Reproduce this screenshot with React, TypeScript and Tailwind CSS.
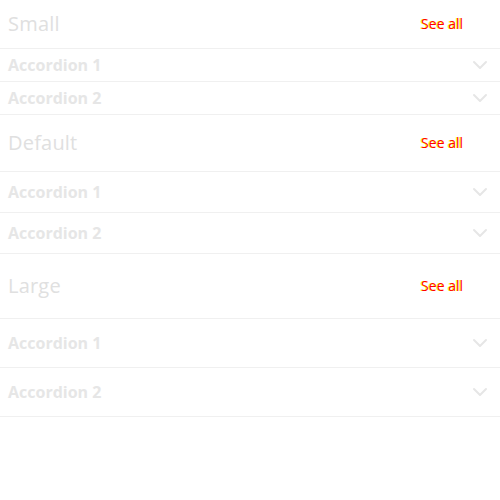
import { ChevronDown } from "lucide-react";

type Size = "small" | "default" | "large";

const SECTIONS: { size: Size; title: string }[] = [
  { size: "small", title: "Small" },
  { size: "default", title: "Default" },
  { size: "large", title: "Large" },
];

// heights include the 1px bottom border
const headerH: Record<Size, string> = {
  small: "h-[49px]",
  default: "h-[57px]",
  large: "h-[65px]",
};

const rowH: Record<Size, string> = {
  small: "h-[33px]",
  default: "h-[41px]",
  large: "h-[49px]",
};

function Section({ size, title }: { size: Size; title: string }) {
  return (
    <section>
      <div className={`flex items-center justify-between border-b border-[#f0f0f0] pl-2 pr-[37px] ${headerH[size]}`}>
        <h2 className="text-[20px] tracking-[0.2px] text-[#e0e0e0]">{title}</h2>
        <a className="mb-[2px] text-[14px] font-medium text-[#ff0000] [text-shadow:-1px_0_0_#ffff00]">See all</a>
      </div>
      {["Accordion 1", "Accordion 2"].map((label) => (
        <div
          key={label}
          className={`flex items-center justify-between border-b border-[#f0f0f0] pl-2 pr-2 ${rowH[size]}`}
        >
          <span className="text-[16px] font-bold text-[#e6e6e6]">{label}</span>
          <ChevronDown size={24} strokeWidth={2} className="text-[#e6e6e6]" />
        </div>
      ))}
    </section>
  );
}

export default function App() {
  return (
    <div className="h-[500px] w-[500px] bg-white font-['Open_Sans',sans-serif]">
      {SECTIONS.map((s) => (
        <Section key={s.size} {...s} />
      ))}
    </div>
  );
}
